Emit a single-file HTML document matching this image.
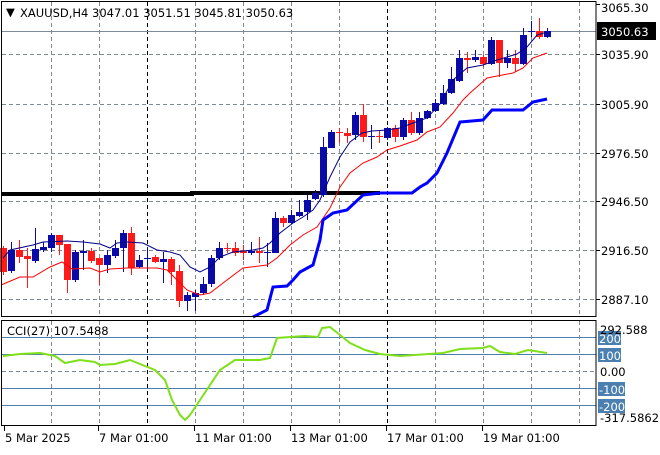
<!DOCTYPE html><html><head><meta charset="utf-8"><style>
body{margin:0;background:#fff;width:660px;height:450px;overflow:hidden;font-family:"Liberation Sans",Tahoma,sans-serif}
svg text{font-family:"DejaVu Sans","Liberation Sans",sans-serif;font-size:11.5px}
</style></head><body>
<svg id="s" width="660" height="450" xmlns="http://www.w3.org/2000/svg">
<rect width="660" height="450" fill="#fff"/>
<g id="grid" stroke="#808a94" stroke-dasharray="4,3" stroke-width="1"></g>
<line x1="1" y1="31.5" x2="596" y2="31.5" stroke="#7d8b9a"/>
<polyline fill="none" stroke="#000" stroke-width="4" points="1,194 192,194 192,193 380,193"/>
<g id="c"></g>
<polyline fill="none" stroke="#00008b" stroke-width="1" points="3,258 10,250 33,245 43,242 67,241 83,242 100,244 110,248 117,243 127,242 143,243 157,250 170,252 180,255 190,267 200,272 210,267 220,257 233,252 253,250 263,248 270,243 280,233 293,223 303,217 313,210 320,200 330,177 340,157 350,142 362,133 372,131 387,130 400,128 413,123 427,118 440,104 453,80 467,68 483,65 497,60 517,54 527,47 537,35 547,32"/>
<polyline fill="none" stroke="#ff0000" stroke-width="1" points="1,285 20,277 33,277 50,267 62,262 72,269 90,268 100,272 110,269 127,268 157,268 167,270 177,280 187,290 200,295 210,293 227,280 243,268 267,265 277,258 290,245 303,235 317,227 330,208 340,187 350,173 363,163 377,157 387,150 400,146 417,140 427,132 440,127 453,113 463,100 470,93 487,78 513,73 523,68 533,58 547,53"/>
<polyline fill="none" stroke="#0000ff" stroke-width="3" points="253,317 267,310 273,287 287,286 293,280 300,272 313,265 320,240 323,220 333,213 347,210 363,195 380,193 412,193 420,187 427,183 437,173 447,153 460,122 483,120 492,110 523,110 533,102 547,99"/>
<rect x="1.5" y="1.5" width="594.5" height="315" fill="none" stroke="#000"/>
<text x="6" y="16" fill="#000" font-size="9">▼</text>
<text x="20" y="17" fill="#000">XAUUSD,H4  3047.01 3051.51 3045.81 3050.63</text>
<g id="ax"></g>
<rect x="597" y="22" width="59" height="18" fill="#000"/>
<text x="601" y="36" fill="#fff">3050.63</text>
<!-- indicator -->
<g stroke="#4a7fb0" stroke-width="1"><line x1="2" y1="337.5" x2="596" y2="337.5"/><line x1="2" y1="354.5" x2="596" y2="354.5"/><line x1="2" y1="388.5" x2="596" y2="388.5"/><line x1="2" y1="405.5" x2="596" y2="405.5"/></g>
<line x1="2" y1="371.5" x2="596" y2="371.5" stroke="#808a94" stroke-dasharray="4,3"/>
<g id="g2" stroke="#808a94" stroke-dasharray="4,3"></g>
<polyline fill="none" stroke="#7fe01a" stroke-width="2" points="3,356 20,354 40,353 55,356 65,363 80,360 95,362 100,365 115,364 130,360 145,366 155,370 165,380 172,400 180,415 185,420 190,415 200,400 210,385 220,370 235,360 260,360 270,358 277,338 290,337 305,336 318,337 322,328 330,327 340,335 350,343 365,350 380,354 400,356 443,353 460,349 483,348 490,346 500,352 515,354 528,350 547,353"/>
<rect x="1.5" y="320.5" width="594.5" height="105" fill="none" stroke="#000"/>
<text x="7" y="335" fill="#000">CCI(27) 107.5488</text>
<g fill="#4a7fb0"><rect x="598" y="331" width="23" height="14"/><rect x="598" y="348" width="23" height="14"/><rect x="598" y="382" width="27" height="14"/><rect x="598" y="399" width="27" height="14"/></g>
<g fill="#fff"><text x="599" y="343">200</text><text x="599" y="360">100</text><text x="599" y="394">-100</text><text x="599" y="411">-200</text></g>
<text x="600" y="334" fill="#000">292.588</text>
<text x="600" y="376" fill="#000">0.00</text>
<text x="600" y="422" fill="#000">-317.5862</text>
<g id="dx"></g>
</svg>
<script>
var NS="http://www.w3.org/2000/svg";
function el(p,t,a){var e=document.createElementNS(NS,t);for(var k in a)e.setAttribute(k,a[k]);document.getElementById(p).appendChild(e);return e;}
[51,99,147,195,243,291,339,387,435,483,531,579].forEach(function(x){
 var blk=(x==147||x==387);
 el('grid','line',{x1:x+.5,y1:2,x2:x+.5,y2:316,stroke:blk?'#000':'#808a94'});
 el('g2','line',{x1:x+.5,y1:321,x2:x+.5,y2:425,stroke:blk?'#000':'#808a94'});
});
[54,104,153,201,250,299].forEach(function(y){el('grid','line',{x1:2,y1:y+.5,x2:596,y2:y+.5});});
// axis labels
[[3065.30,4],[3035.90,54],[3005.90,104],[2976.50,153],[2946.50,201],[2916.50,250],[2887.10,299]].forEach(function(a){
 el('ax','line',{x1:596,y1:a[1]+.5,x2:600,y2:a[1]+.5,stroke:'#000'});
 var t=el('ax','text',{x:601,y:a[1]+(a[1]<10?8:5),fill:'#000'});t.textContent=a[0].toFixed(2);
});
[[4,'5 Mar 2025'],[98,'7 Mar 01:00'],[194,'11 Mar 01:00'],[290,'13 Mar 01:00'],[386,'17 Mar 01:00'],[482,'19 Mar 01:00']].forEach(function(a){
 el('dx','line',{x1:a[0]+.5,y1:426,x2:a[0]+.5,y2:431,stroke:'#000'});
 var t=el('dx','text',{x:a[0]+1,y:442,fill:'#000'});t.textContent=a[1];
});
// candles: [type(b/r), bodyTop, bodyBot, wickTop, wickBot]
var C=[
['r',248,272,246,275],['b',250,271,242,273],['r',250,257,240,263],['r',256,259,248,288],['b',249,261,228,263],
['b',247,250,242,252],['b',235,248,233,252],['r',235,245,235,255],['r',244,280,244,293],['b',252,280,250,282],
['b',251,253,240,270],['r',251,261,248,263],['r',258,265,258,285],['b',255,265,250,273],['b',248,256,240,258],
['b',233,248,230,272],['r',233,268,227,275],['b',260,267,255,268],['b',258,259,247,270],['r',257,262,255,263],
['b',259,262,252,283],['r',259,272,257,285],['r',271,301,265,307],['b',295,301,292,311],['b',293,297,290,311],
['b',284,293,277,295],['b',258,284,255,287],['b',248,258,242,260],['r',248,249,243,253],['r',248,253,242,256],
['r',251,253,245,260],['b',251,253,242,255],['r',251,253,237,263],['b',252,253,243,267],['b',218,253,212,253],
['r',218,223,216,227],['b',215,223,210,224],['b',212,216,200,217],['b',200,212,195,220],['b',193,199,190,200],
['b',147,195,137,197],['b',132,148,130,148],['r',132,133,128,143],['r',133,136,128,143],['b',115,135,112,140],
['r',115,137,104,142],['b',136,137,125,149],['r',136,137,130,143],['b',128,138,127,140],['r',128,137,125,142],
['b',120,137,118,140],['r',120,133,112,135],['b',118,133,112,135],['b',111,118,110,119],['b',103,111,99,112],
['b',93,104,85,105],['b',79,93,67,94],['b',58,81,50,82],['r',58,60,52,73],['b',57,60,50,62],
['r',57,64,55,67],['b',40,64,37,65],['r',40,63,40,77],['b',58,63,50,68],['r',58,64,50,72],
['b',35,64,28,65],['b',31,32,21,37],['r',31,37,18,39],['b',31,37,28,38]];
C.forEach(function(c,i){
 var x=3+8*i,col=c[0]=='b'?'#0a0aa8':'#ff1a1a';
 el('c','line',{x1:x+.5,y1:c[3],x2:x+.5,y2:c[4],stroke:col});
 var h=Math.max(1,c[2]-c[1]);
 el('c','rect',{x:x-3,y:c[1],width:7,height:h,fill:col});
});
</script>
</body></html>
